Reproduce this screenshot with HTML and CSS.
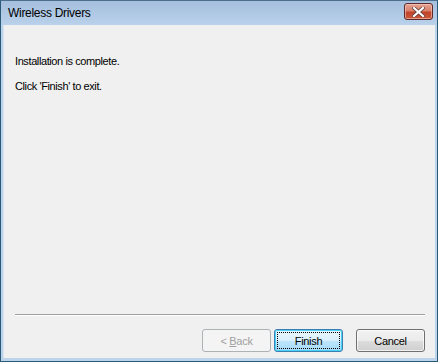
FILE: index.html
```html
<!DOCTYPE html>
<html>
<head>
<meta charset="utf-8">
<link rel="stylesheet" href="styles.css">
</head>
<body>
<div class="window">
  <div class="titlebar">
    <span class="title">Wireless Drivers</span>
    <div class="close">
      <svg width="13" height="10" viewBox="0 0 13 10">
        <path d="M2 1 L11 9 M11 1 L2 9" stroke="#5a3a3a" stroke-width="3.6" stroke-linecap="square"/>
        <path d="M2 1 L11 9 M11 1 L2 9" stroke="#ffffff" stroke-width="2.2" stroke-linecap="square"/>
      </svg>
    </div>
  </div>
  <div class="client">
    <div class="body">
      <p class="line">Installation is complete.</p>
      <p class="line">Click 'Finish' to exit.</p>
    </div>
    <div class="sep"></div>
    <div class="buttons">
      <button class="btn disabled"><span>&lt;&nbsp;<u>B</u>ack</span></button>
      <button class="btn default"><span class="focus">Finish</span></button>
      <button class="btn cancel">Cancel</button>
    </div>
  </div>
</div>
</body>
</html>
```
FILE: styles.css
```css
html, body {
  margin: 0;
  padding: 0;
  background: #ffffff;
}
.window {
  width: 438px;
  height: 362px;
  box-sizing: border-box;
  border: 1px solid #2a5a78;
  border-top-color: #4a6f8f;
  background: #bcd4eb;
  display: flex;
  flex-direction: column;
  padding: 0 2px 3px 2px;
  font-family: "Liberation Sans", Arial, sans-serif;
}
.titlebar {
  height: 24px;
  margin: 0 -2px;
  padding: 0 4px 0 7px;
  background: linear-gradient(#a5bfdd, #b9d1ea);
  display: flex;
  align-items: center;
  justify-content: space-between;
}
.title {
  font-size: 12px;
  color: #000;
  font-family: "Liberation Sans", sans-serif;
  letter-spacing: -0.3px;
  margin-top: -1px;
}
.close {
  width: 27px;
  height: 15px;
  margin-top: -3px;
  border: 1px solid #5b2a2a;
  border-radius: 3px;
  background: linear-gradient(#e5a496 0%, #d9806a 45%, #c2432a 55%, #c95a3c 100%);
  box-shadow: inset 0 0 0 1px rgba(255,210,200,0.55);
  display: flex;
  align-items: center;
  justify-content: center;
}
.client {
  flex: 1;
  background: #f0f0f0;
  display: flex;
  flex-direction: column;
  border-left: 1px solid #d6e4f2;
}
.body {
  flex: 1;
  padding: 30px 0 0 11px;
}
.line {
  margin: 0 0 12px 0;
  font-size: 11px;
  line-height: 13px;
  letter-spacing: -0.4px;
  color: #000;
}
.sep {
  margin: 0 10px 0 11px;
  height: 1px;
  background: #a0a0a0;
  border-bottom: 1px solid #ffffff;
}
.buttons {
  display: flex;
  justify-content: flex-end;
  padding: 13px 10px 6px 0;
  gap: 3px;
}
.btn {
  width: 69px;
  height: 23px;
  box-sizing: border-box;
  border: 1px solid #707070;
  border-radius: 3px;
  background: linear-gradient(#f2f2f2 0%, #ebebeb 50%, #dddddd 51%, #cfcfcf 100%);
  box-shadow: inset 0 0 0 1px rgba(255,255,255,0.7);
  font-family: "Liberation Sans", Arial, sans-serif;
  font-size: 11px;
  letter-spacing: -0.3px;
  color: #000;
  padding: 0;
  display: flex;
  align-items: center;
  justify-content: center;
}
.btn u {
  text-decoration: underline;
}
.btn.disabled {
  border-color: #adb2b5;
  background: #f4f4f4;
  color: #a0a0a0;
  box-shadow: none;
}
.btn.default {
  border-color: #3c7fb1;
  background: linear-gradient(#eaf6fd 0%, #d9f0fc 50%, #bee6fd 51%, #a7d9f5 100%);
  box-shadow: inset 0 0 0 1px #48d2f8;
}
.focus {
  display: flex;
  align-items: center;
  justify-content: center;
  width: 63px;
  height: 17px;
  box-sizing: border-box;
  border: 1px dotted #000;
}
.btn.cancel {
  margin-left: 10px;
}
```
